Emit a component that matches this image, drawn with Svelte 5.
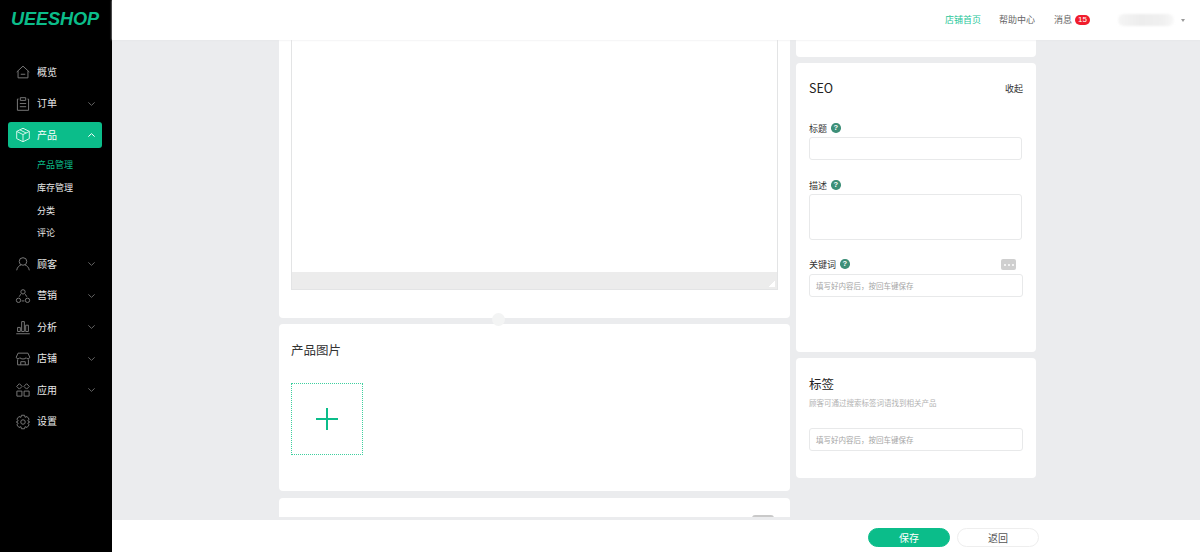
<script>
  const icons = {
    home: 'M3 10 L10 3.5 L17 10 M4.5 9 V16.5 H15.5 V9 M7.5 12.5 H12.5',
    order: 'M5 4.5 H3.8 V17 H16.2 V4.5 H15 M7 3 H13 V6 H7 Z M6.5 9.5 H13.5 M6.5 13 H13.5',
    box: 'M10 2.5 L17 6 V14 L10 17.5 L3 14 V6 Z M3 6 L10 9.5 L17 6 M10 9.5 V17.5 M6.5 4.3 L13.5 7.8',
    user: 'M10 3 A4.2 4.2 0 1 0 10 11.4 A4.2 4.2 0 1 0 10 3 Z M3 17 C3.5 13.5 6 11.4 8 11 M12 11 C14 11.4 16.5 13.5 17 17',
    market: 'M10 3 A2.4 2.4 0 1 0 10 7.8 A2.4 2.4 0 1 0 10 3 Z M5 12.4 A2.4 2.4 0 1 0 5 17.2 A2.4 2.4 0 1 0 5 12.4 Z M15 12.4 A2.4 2.4 0 1 0 15 17.2 A2.4 2.4 0 1 0 15 12.4 Z M7.5 8 L5.8 10.8 M12.5 8 L14.2 10.8 M8.5 15.5 H11.5',
    chart: 'M2.5 17.5 H17.5 M4 15 V10.5 H7 V15 Z M8.5 15 V4 H11.5 V15 Z M13 15 V8 H16 V15 Z',
    store: 'M4.5 3.5 H15.5 L17.5 8 C17.5 10 14 10.5 13.5 8.5 C13 10.5 7 10.5 6.5 8.5 C6 10.5 2.5 10 2.5 8 Z M4 10.5 V16.5 H16 V10.5 M7.5 16.5 V13 H12.5 V16.5',
    apps: 'M6 3 L9 6 L6 9 L3 6 Z M14 3 L17 6 L14 9 L11 6 Z M3.2 11.2 H8.8 V16.8 H3.2 Z M11.2 11.2 H16.8 V16.8 H11.2 Z',
    gear: 'M8.3 2.5 H11.7 L12.3 4.8 L14.5 3.9 L16.8 6.8 L15.3 8.7 L17.5 10 L15.3 11.3 L16.8 13.2 L14.5 16.1 L12.3 15.2 L11.7 17.5 H8.3 L7.7 15.2 L5.5 16.1 L3.2 13.2 L4.7 11.3 L2.5 10 L4.7 8.7 L3.2 6.8 L5.5 3.9 L7.7 4.8 Z M10 7.5 A2.5 2.5 0 1 0 10 12.5 A2.5 2.5 0 1 0 10 7.5 Z'
  };
  const before = [
    { label: '概览', icon: 'home' },
    { label: '订单', icon: 'order', arrow: true },
    { label: '产品', icon: 'box', arrow: true, active: true }
  ];
  const sub = ['产品管理', '库存管理', '分类', '评论'];
  const after = [
    { label: '顾客', icon: 'user', arrow: true },
    { label: '营销', icon: 'market', arrow: true },
    { label: '分析', icon: 'chart', arrow: true },
    { label: '店铺', icon: 'store', arrow: true },
    { label: '应用', icon: 'apps', arrow: true },
    { label: '设置', icon: 'gear' }
  ];
  const placeholder = '填写好内容后，按回车键保存';
</script>

{#snippet navItem(item)}
  <div class="nav-item" class:active={item.active}>
    <svg class="nav-icon" viewBox="0 0 20 20"><path d={icons[item.icon]} /></svg>
    <span>{item.label}</span>
    {#if item.arrow}
      <svg class="arrow" viewBox="0 0 10 6"><path d={item.active ? 'M1.5 4.8 L5 1.5 L8.5 4.8' : 'M1.5 1.2 L5 4.5 L8.5 1.2'} /></svg>
    {/if}
  </div>
{/snippet}

{#snippet help()}
  <i class="help">?</i>
{/snippet}

<div class="app">
  <aside class="side">
    <div class="logo">UEESHOP</div>
    <nav class="nav">
      {#each before as item}{@render navItem(item)}{/each}
      <div class="sub">
        {#each sub as s, i}<div class="sub-item" class:current={i === 0}>{s}</div>{/each}
      </div>
      {#each after as item}{@render navItem(item)}{/each}
    </nav>
  </aside>

  <div class="main">
    <header class="top">
      <span class="link green">店铺首页</span>
      <span class="link">帮助中心</span>
      <span class="link msg">消息<b class="badge">15</b></span>
      <span class="user"></span>
      <span class="caret"></span>
    </header>

    <div class="scroll">
      <div class="columns">
        <div class="col-left">
          <section class="card editor-card">
            <div class="editor">
              <div class="editor-body"></div>
              <div class="editor-bar"><span class="grip"></span></div>
            </div>
            <span class="knob"></span>
          </section>
          <section class="card image-card">
            <h3>产品图片</h3>
            <div class="upload">
              <svg viewBox="0 0 24 24"><path d="M12 1 V23 M1 12 H23" /></svg>
            </div>
          </section>
          <section class="card next-card"><span class="next-btn"></span></section>
        </div>

        <div class="col-right">
          <section class="card stub"></section>
          <section class="card seo">
            <div class="seo-head"><h2>SEO</h2><span class="toggle">收起</span></div>
            <label class="lab first">标题 {@render help()}</label>
            <div class="input narrow"></div>
            <label class="lab second">描述 {@render help()}</label>
            <div class="input narrow area"></div>
            <div class="lab third">
              <span>关键词 {@render help()}</span>
              <span class="more"><i></i><i></i><i></i></span>
            </div>
            <div class="input">{placeholder}</div>
          </section>
          <section class="card tags">
            <h2>标签</h2>
            <p>顾客可通过搜索标签词语找到相关产品</p>
            <div class="input">{placeholder}</div>
          </section>
        </div>
      </div>
    </div>

    <footer class="foot">
      <button class="btn save">保存</button>
      <button class="btn back">返回</button>
    </footer>
  </div>
</div>

<style>
  :global(body) {
    margin: 0;
    background: #ebecee;
    font-family: "Noto Sans CJK SC", "Noto Sans", sans-serif;
    overflow: hidden;
  }
  .app { display: flex; width: 1200px; height: 552px; overflow: hidden; }

  .side { width: 112px; flex: none; background: #000; color: #fff; }
  .logo {
    height: 39px;
    padding-left: 11px;
    font: italic 700 18.2px/39px "Liberation Sans", sans-serif;
    color: #0bbd8a;
    letter-spacing: -0.15px;
  }
  .nav { display: flex; flex-direction: column; padding: 20px 10px 0 8px; }
  .nav-item {
    display: flex;
    align-items: center;
    height: 26px;
    margin-bottom: 5.5px;
    padding: 0 0 2px 29px;
    box-sizing: border-box;
    position: relative;
    font-size: 10px;
    color: #e8e8e8;
    border-radius: 3px;
  }
  .nav-item.active { background: #0bbd8a; color: #fff; }
  .nav-icon {
    position: absolute;
    left: 6px;
    top: 4px;
    width: 18px;
    height: 18px;
    fill: none;
    stroke: #777;
    stroke-width: 1.1;
  }
  .active .nav-icon { stroke: #d5f5ea; }
  .arrow {
    position: absolute;
    right: 6px;
    top: 10px;
    width: 9px;
    height: 6px;
    fill: none;
    stroke: #666;
    stroke-width: 1.1;
  }
  .active .arrow { stroke: #fff; }
  .sub { margin: 0.7px 0 6.3px; }
  .sub-item {
    height: 22.7px;
    line-height: 22.7px;
    padding-left: 29px;
    font-size: 9px;
    color: #e8e8e8;
  }
  .sub-item.current { color: #0bbd8a; }

  .main { flex: 1; min-width: 0; display: flex; flex-direction: column; }

  .top {
    height: 40px;
    flex: none;
    display: flex;
    align-items: center;
    background: #fff;
    box-shadow: 0 0 2px #e2e3e5;
    position: relative;
    z-index: 1;
    padding-left: 833px;
    box-sizing: border-box;
    font-size: 9px;
    color: #666;
  }
  .link { margin-right: 18px; line-height: 40px; white-space: nowrap; }
  .green { color: #2bc79a; }
  .msg { display: flex; align-items: center; margin: 0 28px 0 1px; }
  .badge {
    display: block;
    width: 15px;
    height: 10px;
    margin-left: 3px;
    border-radius: 5px;
    background: #f01c2c;
    color: #fff;
    font: 400 8px/10px "Liberation Sans", sans-serif;
    text-align: center;
  }
  .user {
    width: 56px;
    height: 12px;
    border-radius: 6px;
    background: linear-gradient(90deg, #f5f5f5, #ededed 40%, #f0f0f0 80%, #f8f8f8);
    filter: blur(1px);
  }
  .caret {
    margin-left: 7px;
    border: 2.5px solid transparent;
    border-top: 3px solid #9a9a9a;
    border-bottom: 0;
  }

  .scroll { height: 477px; flex: none; overflow: hidden; }
  .columns { display: flex; gap: 6px; padding-left: 167px; align-items: flex-start; }
  .col-left, .col-right { display: flex; flex-direction: column; }
  .col-left { width: 511px; }
  .col-right { width: 240px; gap: 6px; }
  .card { background: #fff; border-radius: 4px; box-sizing: border-box; }

  .editor-card { height: 278px; padding: 0 12px; position: relative; border-radius: 0 0 4px 4px; margin-bottom: 6px; }
  .editor { height: 250px; box-sizing: border-box; border: 1px solid #e3e4e5; border-top: 0; display: flex; flex-direction: column; }
  .editor-body { flex: 1; }
  .editor-bar { height: 17px; background: #ececec; position: relative; }
  .grip {
    position: absolute;
    right: 2px;
    bottom: 2px;
    width: 6px;
    height: 6px;
    background: linear-gradient(135deg, transparent 50%, #fff 50%);
  }
  .knob {
    position: absolute;
    left: 213px;
    bottom: -8px;
    width: 13px;
    height: 13px;
    border-radius: 50%;
    background: #f3f4f4;
  }

  .image-card { height: 167px; padding: 16px 12px 0; margin-bottom: 7px; }
  h3 { margin: 0; font-size: 12.5px; font-weight: 400; line-height: 20px; color: #333; }
  .upload {
    width: 72px;
    height: 72px;
    margin-top: 23px;
    box-sizing: border-box;
    border: 1px dotted #3fcf9f;
    display: flex;
    align-items: center;
    justify-content: center;
  }
  .upload svg { width: 24px; height: 24px; fill: none; stroke: #0bbd8a; stroke-width: 2; }

  .next-card { height: 60px; padding: 17px 16px 0 0; display: flex; justify-content: flex-end; align-items: flex-start; }
  .next-btn { width: 22px; height: 12px; border-radius: 3px; background: #c9c9c9; }

  .stub { height: 17px; border-radius: 0 0 4px 4px; }
  .seo { height: 289px; padding: 15px 13px 0; }
  .seo-head { display: flex; justify-content: space-between; align-items: center; height: 20px; }
  h2 { margin: 0; font-size: 12.5px; font-weight: 400; line-height: 20px; color: #222; }
  .toggle { font-size: 9px; color: #333; }
  .lab { display: flex; align-items: center; height: 12px; font-size: 9px; color: #333; gap: 4px; }
  .lab.first { margin-top: 24px; margin-bottom: 3px; }
  .lab.second { margin-top: 19px; margin-bottom: 3px; }
  .lab.third { margin-top: 18px; margin-bottom: 4px; justify-content: space-between; align-items: center; padding-right: 7px; height: 12px; }
  .lab.third > span:first-child { display: flex; align-items: center; gap: 4px; }
  .help {
    display: inline-block;
    width: 9.5px;
    height: 9.5px;
    border-radius: 50%;
    background: #3d8f78;
    color: #fff;
    font: 700 7.5px/9.5px "Liberation Sans", sans-serif;
    text-align: center;
  }
  .more {
    width: 15px;
    height: 11px;
    border-radius: 2px;
    background: #cfcfcf;
    display: flex;
    align-items: center;
    justify-content: center;
    gap: 2px;
    margin-top: 1px;
  }
  .more i { width: 2px; height: 2px; border-radius: 50%; background: #fff; }
  .input {
    height: 23px;
    box-sizing: border-box;
    border: 1px solid #e8e9ea;
    border-radius: 3px;
    padding-left: 6px;
    font-size: 7.5px;
    line-height: 22px;
    color: #a5a5a5;
  }
  .input.narrow { width: 213px; }
  .input.area { height: 46px; }

  .tags { height: 120px; padding: 16px 13px 0; }
  .tags p { margin: 2px 0 18px; font-size: 7.5px; line-height: 14px; color: #b2b2b2; }

  .foot {
    margin-top: auto;
    height: 32px;
    flex: none;
    background: #fff;
    display: flex;
    align-items: flex-start;
    justify-content: flex-end;
    gap: 7px;
    padding: 8px 161px 0 0;
    box-sizing: border-box;
  }
  .btn {
    width: 82px;
    height: 19px;
    padding: 0;
    border-radius: 10px;
    font-family: inherit;
    font-size: 10px;
    line-height: 17px;
    box-sizing: border-box;
  }
  .save { background: #0bbd8a; border: 1px solid #0bbd8a; color: #fff; }
  .back { background: #fff; border: 1px solid #eeeeee; color: #555; }
</style>
